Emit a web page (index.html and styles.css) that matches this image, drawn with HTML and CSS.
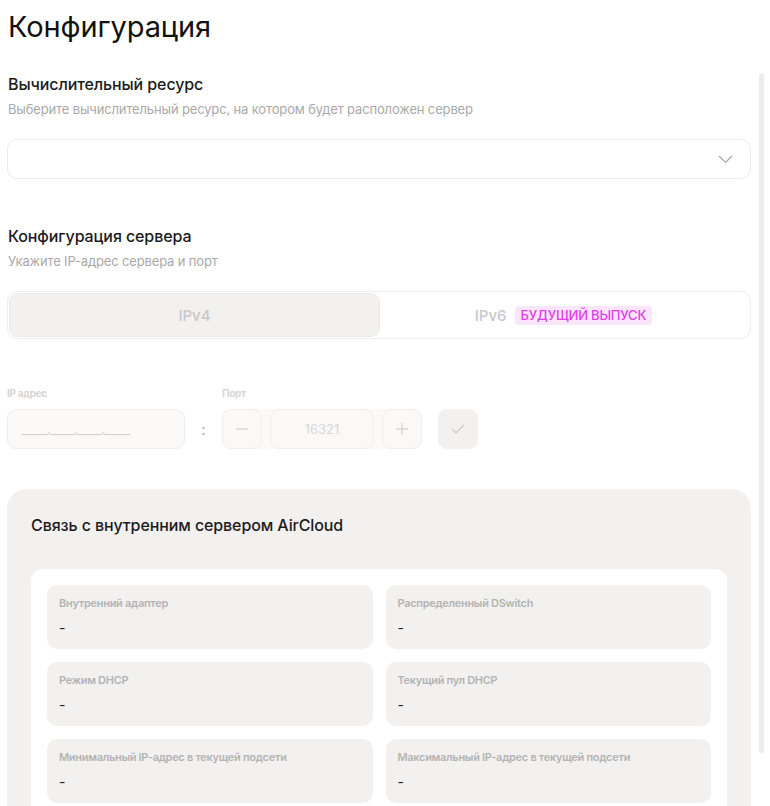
FILE: index.html
```html
<html>
<head>
    <title>Конфигурация</title>
    <link rel="stylesheet" href="styles.css">
</head>
<body>
<div class="page">
    <div class="main">
        <h1 class="title">Конфигурация</h1>

        <h2 class="section-title first">Вычислительный ресурс</h2>
        <p class="section-sub">Выберите вычислительный ресурс, на котором будет расположен сервер</p>
        <div class="select">
            <svg width="15" height="9" viewBox="0 0 15 9"><polyline points="1,1 7.5,7.5 14,1" fill="none" stroke="#a3a3a3" stroke-width="1.2"/></svg>
        </div>

        <h2 class="section-title">Конфигурация сервера</h2>
        <p class="section-sub">Укажите IP-адрес сервера и порт</p>
        <div class="tabs">
            <div class="tab active">IPv4</div>
            <div class="tab">IPv6 <span class="badge">Будущий выпуск</span></div>
        </div>

        <div class="fields">
            <div class="field ip">
                <label class="field-label">IP адрес</label>
                <div class="input">_____._____._____._____</div>
            </div>
            <div class="colon">:</div>
            <div class="field">
                <label class="field-label">Порт</label>
                <div class="port">
                    <div class="btn">
                        <svg width="14" height="14" viewBox="0 0 14 14"><line x1="1" y1="7" x2="13" y2="7" stroke="#cfcfcf" stroke-width="1.2"/></svg>
                    </div>
                    <div class="port-value">16321</div>
                    <div class="btn">
                        <svg width="14" height="14" viewBox="0 0 14 14"><line x1="1" y1="7" x2="13" y2="7" stroke="#cfcfcf" stroke-width="1.2"/><line x1="7" y1="1" x2="7" y2="13" stroke="#cfcfcf" stroke-width="1.2"/></svg>
                    </div>
                </div>
            </div>
            <div class="btn apply">
                <svg width="14" height="10" viewBox="0 0 14 10"><polyline points="1,5 5,9 13,1" fill="none" stroke="#c9c9c9" stroke-width="1.1"/></svg>
            </div>
        </div>

        <div class="card">
            <h3 class="card-title">Связь с внутренним сервером AirCloud</h3>
            <div class="card-body">
                <div class="item">
                    <div class="item-label">Внутренний адаптер</div>
                    <div class="item-value">-</div>
                </div>
                <div class="item">
                    <div class="item-label">Распределенный DSwitch</div>
                    <div class="item-value">-</div>
                </div>
                <div class="item">
                    <div class="item-label">Режим DHCP</div>
                    <div class="item-value">-</div>
                </div>
                <div class="item">
                    <div class="item-label">Текущий пул DHCP</div>
                    <div class="item-value">-</div>
                </div>
                <div class="item">
                    <div class="item-label">Минимальный IP-адрес в текущей подсети</div>
                    <div class="item-value">-</div>
                </div>
                <div class="item">
                    <div class="item-label">Максимальный IP-адрес в текущей подсети</div>
                    <div class="item-value">-</div>
                </div>
            </div>
        </div>
    </div>
    <div class="scrollbar"></div>
</div>
</body>
</html>
```

FILE: styles.css
```css
body {
    margin: 0;
    font-family: Inter, "Noto Sans", sans-serif;
    background-color: #fff;
    color: #1b1b1b;
}

.page {
    display: flex;
    align-items: flex-start;
}

.main {
    width: 744px;
    padding-left: 7px;
}

.scrollbar {
    width: 5px;
    height: 680px;
    margin-top: 73px;
    margin-left: 8px;
    background-color: #ececec;
    border-radius: 3px;
}

.title {
    margin: 0;
    padding-top: 9px;
    padding-left: 1px;
    font-size: 29px;
    line-height: 36px;
    font-weight: 400;
    color: #111;
    letter-spacing: -0.1px;
}

.section-title {
    margin: 47px 0 0 1px;
    font-size: 16px;
    line-height: 20px;
    font-weight: 500;
    letter-spacing: -0.1px;
}

.section-title.first {
    margin-top: 29px;
}

.section-sub {
    margin: 6px 0 0 1px;
    font-size: 13px;
    line-height: 18px;
    color: #a9a9a9;
    letter-spacing: -0.15px;
}

.select {
    margin-top: 21px;
    height: 38px;
    border: 1px solid #ebebeb;
    border-radius: 10px;
    display: flex;
    align-items: center;
    justify-content: flex-end;
    padding-right: 17px;
}

.tabs {
    margin-top: 21px;
    border: 1px solid #ededed;
    border-radius: 10px;
    padding: 2px;
    display: grid;
    grid-template-columns: 1fr 1fr;
}

.tab {
    height: 42px;
    display: flex;
    align-items: center;
    justify-content: center;
    gap: 8px;
    font-size: 15px;
    font-weight: 500;
    color: #c8c8c8;
    border-radius: 8px;
}

.tab.active {
    background-color: #f2f1ef;
    box-shadow: 0 0 0 1px #ebeae8;
}

.badge {
    background-color: #fbe5fc;
    color: #e03ee8;
    font-size: 13px;
    line-height: 19px;
    padding: 0 6px;
    border-radius: 4px;
    text-transform: uppercase;
    letter-spacing: -0.2px;
}

.fields {
    margin-top: 48px;
    display: flex;
    align-items: flex-end;
}

.field {
    display: flex;
    flex-direction: column;
    gap: 10px;
}

.field-label {
    font-size: 10px;
    line-height: 12px;
    font-weight: 700;
    color: #d6d6d6;
    letter-spacing: -0.3px;
}

.input {
    width: 162px;
    height: 38px;
    padding-left: 14px;
    background-color: #faf9f8;
    border: 1px solid #f0efed;
    border-radius: 9px;
    display: flex;
    align-items: center;
    font-size: 13px;
    color: #d0d0d0;
    letter-spacing: -1px;
}

.colon {
    width: 37px;
    height: 40px;
    display: flex;
    align-items: center;
    justify-content: center;
    font-size: 15px;
    color: #aaa;
}

.port {
    display: flex;
    gap: 8px;
    background-color: #fbfaf9;
    border-radius: 9px;
}

.btn {
    width: 38px;
    height: 38px;
    border: 1px solid #f0efed;
    border-radius: 9px;
    background-color: #faf9f8;
    display: flex;
    align-items: center;
    justify-content: center;
}

.port-value {
    width: 102px;
    height: 38px;
    border: 1px solid #f0efed;
    border-radius: 9px;
    background-color: #faf9f8;
    display: flex;
    align-items: center;
    justify-content: center;
    font-size: 13px;
    color: #d8d8d8;
}

.btn.apply {
    margin-left: 16px;
    background-color: #f2f1ef;
    border-color: #f2f1ef;
}

.card {
    margin-top: 40px;
    background-color: #f2f1ef;
    border-radius: 20px;
    padding: 24px;
}

.card-title {
    margin: 0;
    font-size: 16px;
    line-height: 24px;
    font-weight: 500;
    letter-spacing: -0.1px;
}

.card-body {
    margin-top: 32px;
    background-color: #fff;
    border-radius: 12px;
    padding: 16px;
    display: grid;
    grid-template-columns: 1fr 1fr;
    gap: 13px;
}

.item {
    background-color: #f2f1ef;
    border-radius: 10px;
    padding: 11px 12px 12px 12px;
}

.item-label {
    font-size: 11px;
    line-height: 14px;
    font-weight: 600;
    color: #b4b4b4;
    letter-spacing: -0.3px;
}

.item-value {
    margin-top: 9px;
    font-size: 14px;
    line-height: 18px;
    color: #222;
}
```
